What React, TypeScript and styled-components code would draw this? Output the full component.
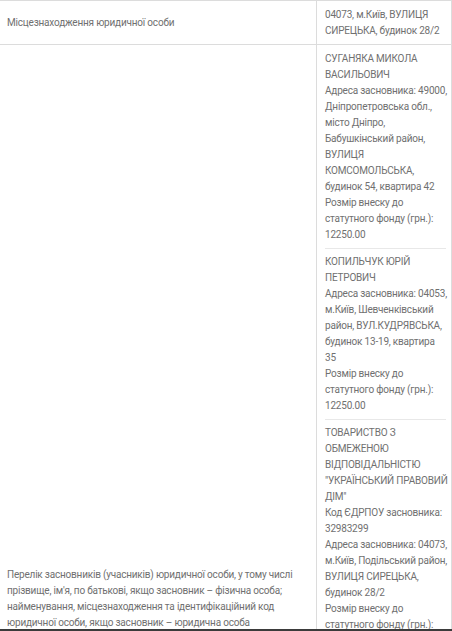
import React from "react";
import styled, { createGlobalStyle } from "styled-components";

// lines as they break in the narrow value column
const ADDRESS = ["04073, м.Київ, ВУЛИЦЯ", "СИРЕЦЬКА, будинок 28/2"];

const FOUNDERS: string[][] = [
  [
    "СУГАНЯКА МИКОЛА",
    "ВАСИЛЬОВИЧ",
    "Адреса засновника: 49000,",
    "Дніпропетровська обл.,",
    "місто Дніпро,",
    "Бабушкінський район,",
    "ВУЛИЦЯ",
    "КОМСОМОЛЬСЬКА,",
    "будинок 54, квартира 42",
    "Розмір внеску до",
    "статутного фонду (грн.):",
    "12250.00",
  ],
  [
    "КОПИЛЬЧУК ЮРІЙ",
    "ПЕТРОВИЧ",
    "Адреса засновника: 04053,",
    "м.Київ, Шевченківський",
    "район, ВУЛ.КУДРЯВСЬКА,",
    "будинок 13-19, квартира",
    "35",
    "Розмір внеску до",
    "статутного фонду (грн.):",
    "12250.00",
  ],
  [
    "ТОВАРИСТВО З",
    "ОБМЕЖЕНОЮ",
    "ВІДПОВІДАЛЬНІСТЮ",
    "\"УКРАЇНСЬКИЙ ПРАВОВИЙ",
    "ДІМ\"",
    "Код ЄДРПОУ засновника:",
    "32983299",
    "Адреса засновника: 04073,",
    "м.Київ, Подільський район,",
    "ВУЛИЦЯ СИРЕЦЬКА,",
    "будинок 28/2",
    "Розмір внеску до",
    "статутного фонду (грн.):",
    "12250.00",
  ],
];

const GlobalStyle = createGlobalStyle`
  body {
    margin: 0;
    background: #fff;
    font-family: Roboto, "Liberation Sans", Arial, sans-serif;
  }
`;

const Frame = styled.div`
  height: 631px;
  overflow: hidden;
  box-sizing: border-box;
  border-bottom: 2px solid #3b3b3b;
`;

const Table = styled.div`
  width: 452px;
  box-sizing: border-box;
  border-right: 1px solid #dcdcdc;
  font-size: 10px;
  letter-spacing: -0.2px;
  line-height: 16px;
  color: #707070;
`;

const Row = styled.div<{ $height?: number }>`
  display: grid;
  grid-template-columns: 317px 1fr;
  border-top: 1px solid #dcdcdc;
  min-height: ${(p) => (p.$height ? `${p.$height}px` : "auto")};
`;

const Label = styled.div`
  display: flex;
  align-items: center;
  padding: 6px 6px 5px 7px;
  border-right: 1px solid #dcdcdc;
`;

const Value = styled.div`
  padding: 6px 5px 5px 8px;
  overflow: hidden;
`;

const Line = styled.div`
  white-space: nowrap;
`;

const FounderBlock = styled.div`
  padding: 0 0 5px;
  & + & {
    border-top: 1px solid #e8e8e8;
    padding-top: 5px;
  }
`;

const App: React.FC = () => {
  return (
    <Frame>
      <GlobalStyle />
      <Table>
        <Row>
          <Label>Місцезнаходження юридичної особи</Label>
          <Value>
            {ADDRESS.map((l) => (
              <Line key={l}>{l}</Line>
            ))}
          </Value>
        </Row>
        <Row $height={1107}>
          <Label>
            Перелік засновників (учасників) юридичної особи, у тому числі
            прізвище, ім'я, по батькові, якщо засновник – фізична особа;
            найменування, місцезнаходження та ідентифікаційний код юридичної
            особи, якщо засновник – юридична особа
          </Label>
          <Value>
            {FOUNDERS.map((lines) => (
              <FounderBlock key={lines[0]}>
                {lines.map((l, i) => (
                  <Line key={i}>{l}</Line>
                ))}
              </FounderBlock>
            ))}
          </Value>
        </Row>
      </Table>
    </Frame>
  );
};

export default App;
